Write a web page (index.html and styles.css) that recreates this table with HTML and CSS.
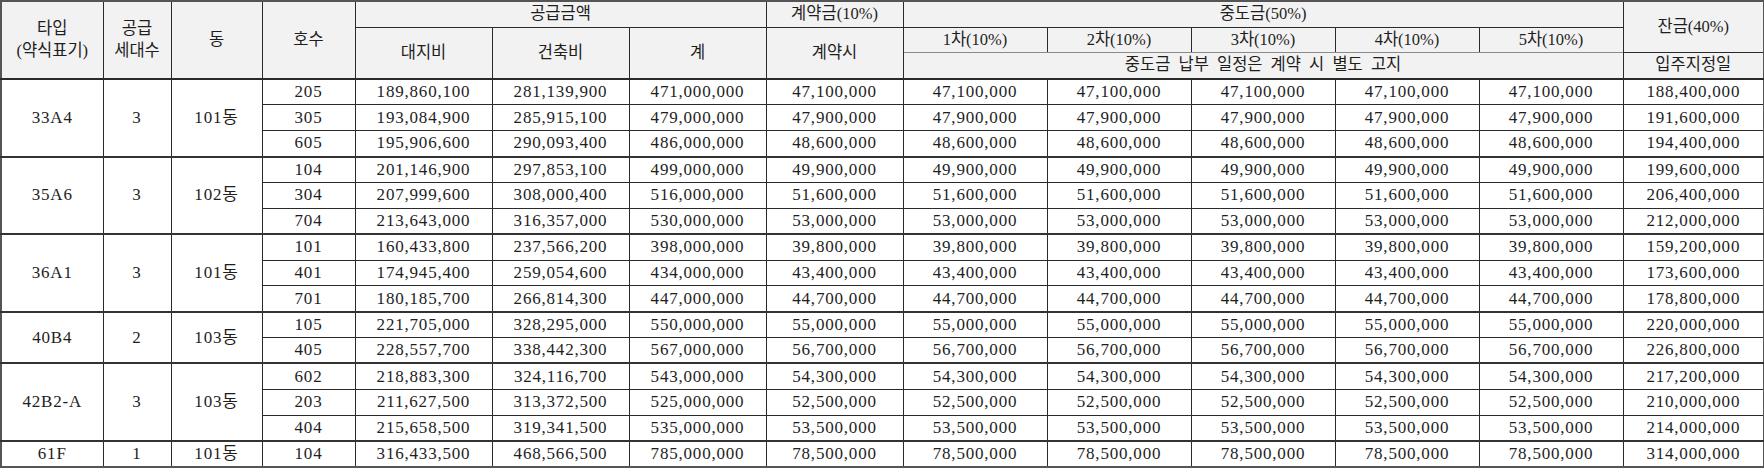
FILE: index.html
```html
<!DOCTYPE html>
<html lang="ko">
<head>
<meta charset="utf-8">
<title>공급금액 및 납부일정</title>
<link rel="stylesheet" href="styles.css">
</head>
<body>
<table class="price">
  <colgroup>
    <col class="c-type"><col class="c-cnt"><col class="c-dong"><col class="c-ho">
    <col class="c-amt"><col class="c-amt"><col class="c-amt"><col class="c-amt">
    <col class="c-mid"><col class="c-mid"><col class="c-mid"><col class="c-mid"><col class="c-mid">
    <col class="c-bal">
  </colgroup>
  <thead>
    <tr class="h1">
      <th rowspan="3">타입<br>(약식표기)</th>
      <th rowspan="3">공급<br>세대수</th>
      <th rowspan="3">동</th>
      <th rowspan="3">호수</th>
      <th colspan="3">공급금액</th>
      <th>계약금(10%)</th>
      <th colspan="5">중도금(50%)</th>
      <th rowspan="2">잔금(40%)</th>
    </tr>
    <tr class="h2">
      <th rowspan="2">대지비</th>
      <th rowspan="2">건축비</th>
      <th rowspan="2">계</th>
      <th rowspan="2">계약시</th>
      <th class="sub">1차(10%)</th>
      <th class="sub">2차(10%)</th>
      <th class="sub">3차(10%)</th>
      <th class="sub">4차(10%)</th>
      <th class="sub">5차(10%)</th>
    </tr>
    <tr class="h3">
      <th colspan="5" class="note">중도금 납부 일정은 계약 시 별도 고지</th>
      <th>입주지정일</th>
    </tr>
  </thead>
  <tbody class="grp">
    <tr><td rowspan="3">33A4</td><td rowspan="3">3</td><td rowspan="3">101동</td><td>205</td><td>189,860,100</td><td>281,139,900</td><td>471,000,000</td><td>47,100,000</td><td>47,100,000</td><td>47,100,000</td><td>47,100,000</td><td>47,100,000</td><td>47,100,000</td><td>188,400,000</td></tr>
    <tr><td>305</td><td>193,084,900</td><td>285,915,100</td><td>479,000,000</td><td>47,900,000</td><td>47,900,000</td><td>47,900,000</td><td>47,900,000</td><td>47,900,000</td><td>47,900,000</td><td>191,600,000</td></tr>
    <tr><td>605</td><td>195,906,600</td><td>290,093,400</td><td>486,000,000</td><td>48,600,000</td><td>48,600,000</td><td>48,600,000</td><td>48,600,000</td><td>48,600,000</td><td>48,600,000</td><td>194,400,000</td></tr>
  </tbody>
  <tbody class="grp">
    <tr><td rowspan="3">35A6</td><td rowspan="3">3</td><td rowspan="3">102동</td><td>104</td><td>201,146,900</td><td>297,853,100</td><td>499,000,000</td><td>49,900,000</td><td>49,900,000</td><td>49,900,000</td><td>49,900,000</td><td>49,900,000</td><td>49,900,000</td><td>199,600,000</td></tr>
    <tr><td>304</td><td>207,999,600</td><td>308,000,400</td><td>516,000,000</td><td>51,600,000</td><td>51,600,000</td><td>51,600,000</td><td>51,600,000</td><td>51,600,000</td><td>51,600,000</td><td>206,400,000</td></tr>
    <tr><td>704</td><td>213,643,000</td><td>316,357,000</td><td>530,000,000</td><td>53,000,000</td><td>53,000,000</td><td>53,000,000</td><td>53,000,000</td><td>53,000,000</td><td>53,000,000</td><td>212,000,000</td></tr>
  </tbody>
  <tbody class="grp">
    <tr><td rowspan="3">36A1</td><td rowspan="3">3</td><td rowspan="3">101동</td><td>101</td><td>160,433,800</td><td>237,566,200</td><td>398,000,000</td><td>39,800,000</td><td>39,800,000</td><td>39,800,000</td><td>39,800,000</td><td>39,800,000</td><td>39,800,000</td><td>159,200,000</td></tr>
    <tr><td>401</td><td>174,945,400</td><td>259,054,600</td><td>434,000,000</td><td>43,400,000</td><td>43,400,000</td><td>43,400,000</td><td>43,400,000</td><td>43,400,000</td><td>43,400,000</td><td>173,600,000</td></tr>
    <tr><td>701</td><td>180,185,700</td><td>266,814,300</td><td>447,000,000</td><td>44,700,000</td><td>44,700,000</td><td>44,700,000</td><td>44,700,000</td><td>44,700,000</td><td>44,700,000</td><td>178,800,000</td></tr>
  </tbody>
  <tbody class="grp">
    <tr><td rowspan="2">40B4</td><td rowspan="2">2</td><td rowspan="2">103동</td><td>105</td><td>221,705,000</td><td>328,295,000</td><td>550,000,000</td><td>55,000,000</td><td>55,000,000</td><td>55,000,000</td><td>55,000,000</td><td>55,000,000</td><td>55,000,000</td><td>220,000,000</td></tr>
    <tr><td>405</td><td>228,557,700</td><td>338,442,300</td><td>567,000,000</td><td>56,700,000</td><td>56,700,000</td><td>56,700,000</td><td>56,700,000</td><td>56,700,000</td><td>56,700,000</td><td>226,800,000</td></tr>
  </tbody>
  <tbody class="grp">
    <tr><td rowspan="3">42B2-A</td><td rowspan="3">3</td><td rowspan="3">103동</td><td>602</td><td>218,883,300</td><td>324,116,700</td><td>543,000,000</td><td>54,300,000</td><td>54,300,000</td><td>54,300,000</td><td>54,300,000</td><td>54,300,000</td><td>54,300,000</td><td>217,200,000</td></tr>
    <tr><td>203</td><td>211,627,500</td><td>313,372,500</td><td>525,000,000</td><td>52,500,000</td><td>52,500,000</td><td>52,500,000</td><td>52,500,000</td><td>52,500,000</td><td>52,500,000</td><td>210,000,000</td></tr>
    <tr><td>404</td><td>215,658,500</td><td>319,341,500</td><td>535,000,000</td><td>53,500,000</td><td>53,500,000</td><td>53,500,000</td><td>53,500,000</td><td>53,500,000</td><td>53,500,000</td><td>214,000,000</td></tr>
  </tbody>
  <tbody class="grp">
    <tr><td>61F</td><td>1</td><td>101동</td><td>104</td><td>316,433,500</td><td>468,566,500</td><td>785,000,000</td><td>78,500,000</td><td>78,500,000</td><td>78,500,000</td><td>78,500,000</td><td>78,500,000</td><td>78,500,000</td><td>314,000,000</td></tr>
  </tbody>
</table>
</body>
</html>
```
FILE: styles.css
```css
html, body {
  margin: 0;
  padding: 0;
  background: #ffffff;
}

.price {
  width: 1764px;
  border-collapse: collapse;
  table-layout: fixed;
  font-family: "Liberation Serif", "Noto Sans CJK KR", serif;
  font-size: 17px;
  color: #1e1e1e;
  border: 2px solid #555555;
}

.c-type { width: 102px; }
.c-cnt  { width: 68px; }
.c-dong { width: 91px; }
.c-ho   { width: 93px; }
.c-amt  { width: 137px; }
.c-mid  { width: 144px; }
.c-bal  { width: 141px; }

.price th,
.price td {
  border: 1px solid #2a2a2a;
  padding: 0;
  text-align: center;
  vertical-align: middle;
  white-space: nowrap;
  overflow: hidden;
}

.price th {
  background: #f2f2f2;
  font-weight: normal;
  font-size: 16.5px;
  line-height: 22px;
}

.price th.twoline {
  line-height: 26px;
}

.price td {
  letter-spacing: 0.8px;
  line-height: 18px;
}

.h1 { height: 26px; }
.h2 { height: 25px; }
.h3 { height: 27px; }

.price .sub {
  border-bottom-color: #8a8a8a;
}

.price .note {
  word-spacing: 4px;
}

.price thead tr.h3 th,
.price thead th[rowspan="3"],
.price thead th[rowspan="2"] {
  border-bottom: 2px solid #2a2a2a;
}

.price thead tr.h1 th[rowspan="2"] {
  border-bottom: 1px solid #2a2a2a;
}

.grp tr {
  height: 25.87px;
}

.price tbody.grp {
  border-top: 2px solid #333333;
}
```
